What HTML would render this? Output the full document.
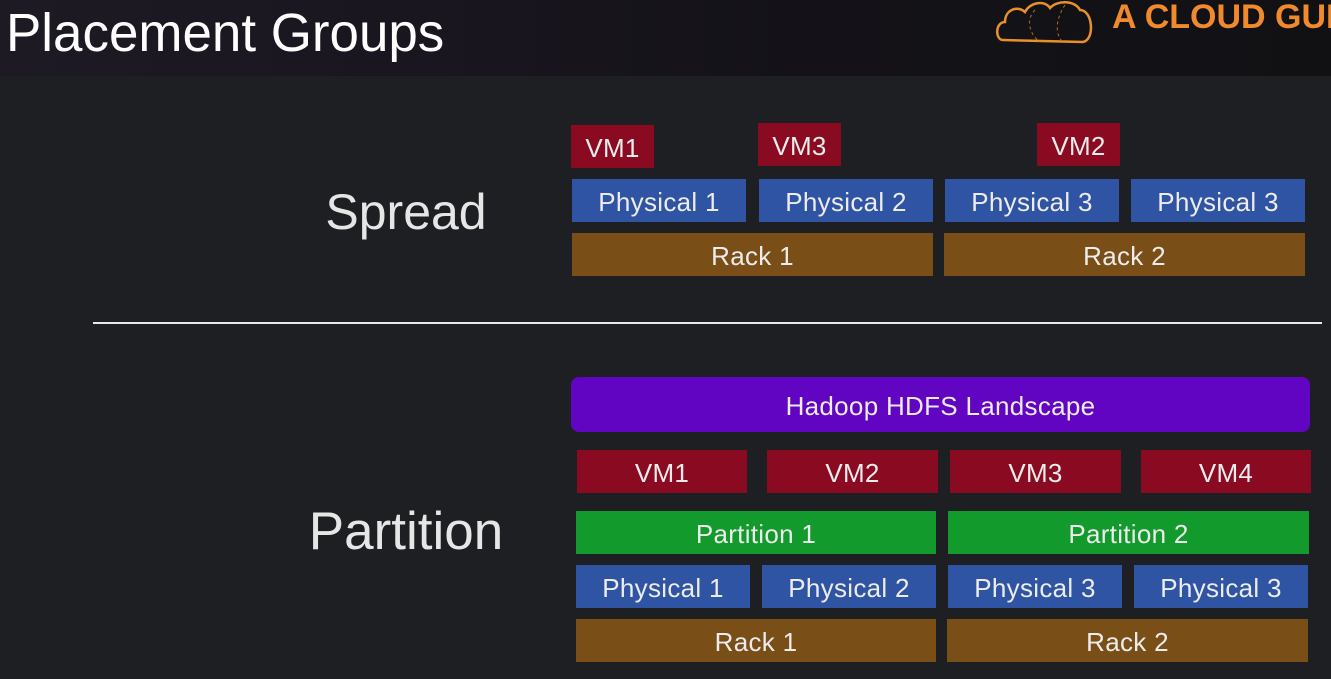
<!DOCTYPE html><html><head><style>
body{margin:0;width:1331px;height:679px;background:#1e1f23;overflow:hidden;position:relative;font-family:"Liberation Sans",sans-serif;color:#eee}
.b{position:absolute;display:flex;align-items:center;justify-content:center;font-size:26px;color:#ececec;padding-top:3px;box-sizing:border-box;letter-spacing:0.3px}
.v{background:#8a0a22}.p{background:#2f54a3}.r{background:#7a4e17}.g{background:#139a2c}
.l{position:absolute;font-size:52px;color:#e6e6e6;transform:translateX(-50%)}
</style></head><body>
<div style="position:absolute;left:0;top:0;width:1331px;height:76px;background:linear-gradient(90deg,#1d1a24,#1a1620 30%,#141218 60%,#111114)"></div>
<div style="position:absolute;left:6px;top:2px;font-size:54px;color:#fff;transform:scaleX(0.98);transform-origin:left">Placement Groups</div>
<svg style="position:absolute;left:995px;top:0" width="105" height="45"><path d="M8 40 C0 40 0 22 10 22 C10 10 22 5 30 12 C35 2 50 0 55 8 C62 0 80 0 85 10 C98 10 100 40 88 42 Z" fill="none" stroke="#e8902a" stroke-width="2.5"/><path d="M40 10 C30 20 35 35 45 42 M70 5 C60 20 60 35 68 42" fill="none" stroke="#a8702a" stroke-dasharray="3 3"/></svg>
<div style="position:absolute;left:1112px;top:-2px;font-size:34px;font-weight:bold;color:#f08a2c;white-space:nowrap">A CLOUD GUI</div>
<div class="l" style="left:406px;top:183px;font-size:50px">Spread</div>
<div class="l" style="left:406px;top:501px;font-size:53px">Partition</div>
<div class="b v" style="left:571px;top:125px;width:83px;height:43px">VM1</div>
<div class="b v" style="left:758px;top:123px;width:83px;height:43px">VM3</div>
<div class="b v" style="left:1037px;top:123px;width:83px;height:43px">VM2</div>
<div class="b p" style="left:572px;top:179px;width:174px;height:43px">Physical 1</div>
<div class="b p" style="left:759px;top:179px;width:174px;height:43px">Physical 2</div>
<div class="b p" style="left:945px;top:179px;width:174px;height:43px">Physical 3</div>
<div class="b p" style="left:1131px;top:179px;width:174px;height:43px">Physical 3</div>
<div class="b r" style="left:572px;top:233px;width:361px;height:43px">Rack 1</div>
<div class="b r" style="left:944px;top:233px;width:361px;height:43px">Rack 2</div>
<div style="position:absolute;left:93px;top:322px;width:1229px;height:2px;background:#e8e8e8"></div>
<div class="b" style="left:571px;top:377px;width:739px;height:55px;background:#6205c2;border-radius:8px">Hadoop HDFS Landscape</div>
<div class="b v" style="left:577px;top:450px;width:170px;height:43px">VM1</div>
<div class="b v" style="left:767px;top:450px;width:171px;height:43px">VM2</div>
<div class="b v" style="left:950px;top:450px;width:171px;height:43px">VM3</div>
<div class="b v" style="left:1141px;top:450px;width:170px;height:43px">VM4</div>
<div class="b g" style="left:576px;top:511px;width:360px;height:43px">Partition 1</div>
<div class="b g" style="left:948px;top:511px;width:361px;height:43px">Partition 2</div>
<div class="b p" style="left:576px;top:565px;width:174px;height:43px">Physical 1</div>
<div class="b p" style="left:762px;top:565px;width:174px;height:43px">Physical 2</div>
<div class="b p" style="left:948px;top:565px;width:174px;height:43px">Physical 3</div>
<div class="b p" style="left:1134px;top:565px;width:174px;height:43px">Physical 3</div>
<div class="b r" style="left:576px;top:619px;width:360px;height:43px">Rack 1</div>
<div class="b r" style="left:947px;top:619px;width:361px;height:43px">Rack 2</div>
</body></html>
